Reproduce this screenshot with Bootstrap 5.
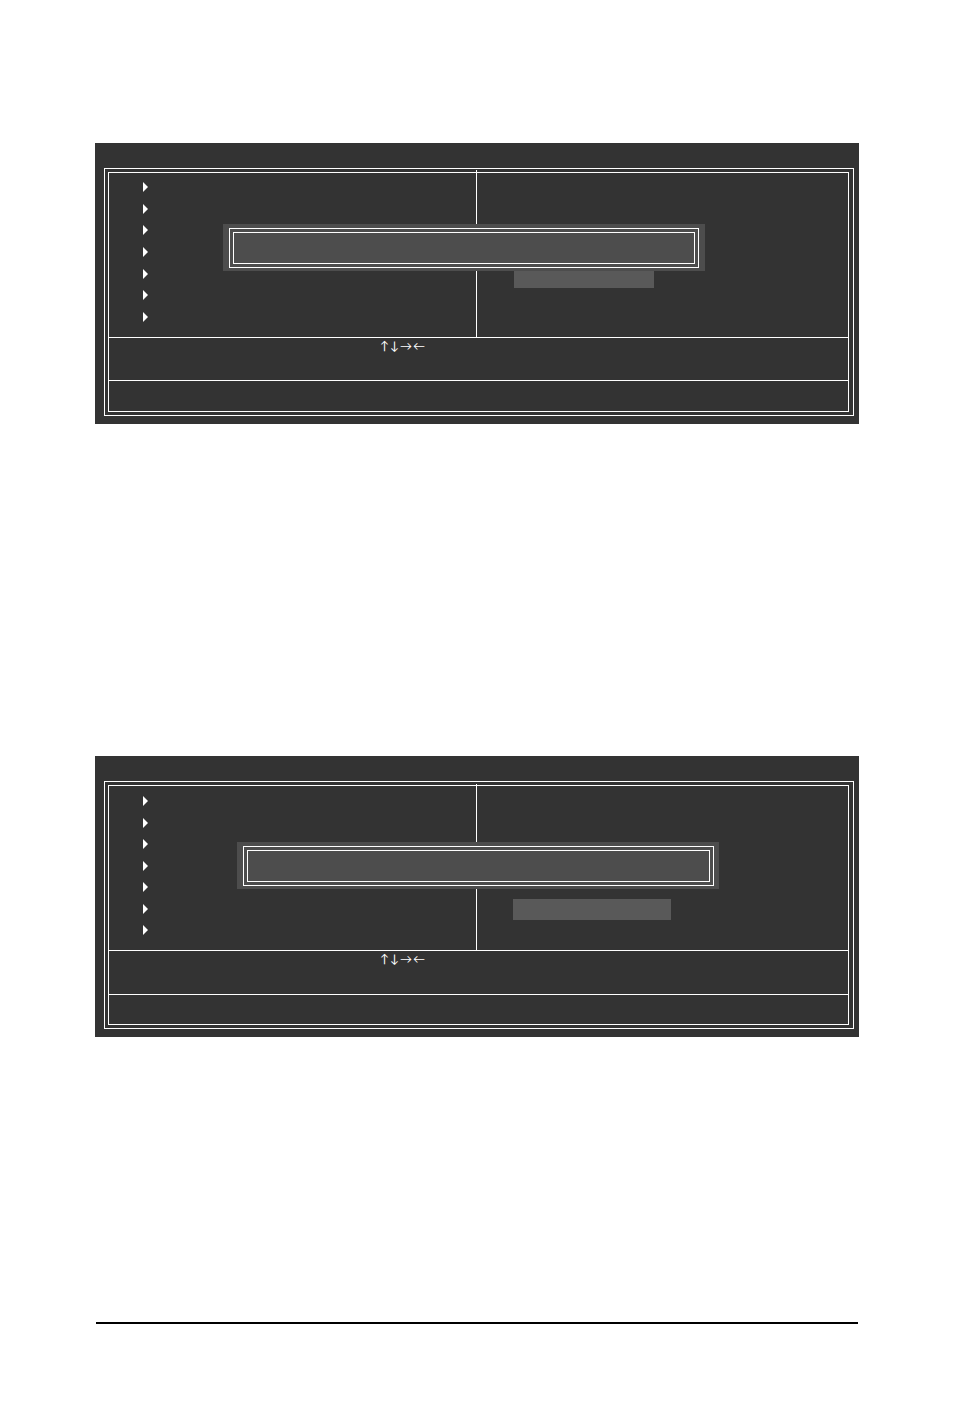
<!DOCTYPE html>
<html lang="en">
<head>
<meta charset="utf-8">
<meta name="viewport" content="width=device-width, initial-scale=1">
<title>CMOS Setup Utility</title>
<link href="https://cdn.jsdelivr.net/npm/bootstrap@5.3.0/dist/css/bootstrap.min.css" rel="stylesheet">
<style>
  body { background: #fff; color: #000; font-family: "Liberation Sans", Arial, sans-serif; }
  .manual-page { padding: 143px 95px 94px; }
  .bios { background: #333; color: #fff; padding: 25px 5px 8px 9px; }
  .bios + .bios { margin-top: 332px; }
  .frame-outer { border: 1px solid #fff; padding: 3px 4px 3px 3px; }
  .frame-inner { border: 1px solid #fff; }
  .menus { display: grid; grid-template-columns: 368fr 371fr; height: 165px; border-bottom: 1px solid #fff; }
  .menu-left { border-right: 1px solid #fff; margin-top: -3px; padding: 12px 0 15px 34px; }
  .menu-left svg { display: block; width: 5px; height: 10px; fill: #fff; }
  .menu-right { padding: 94px 0 0 37px; }
  .selected { background: #595959; width: 140px; height: 21px; }
  .keys { gap: 1px; height: 43px; border-bottom: 1px solid #fff; padding-left: 271px; font-family: Lato, sans-serif; font-size: 12px; line-height: 15px; }
  .hint { height: 30px; }
  .prompt { background: #4d4d4d; left: 128px; top: 81px; width: 482px; padding: 4px 6px 3px; }
  .prompt .frame-outer { padding: 3px; }
  .prompt .frame-inner { height: 32px; }
  .second .menu-left { margin-top: -2px; }
  .second .menu-right { padding: 113px 0 0 36px; }
  .second .selected { width: 158px; }
  .second .keys { height: 44px; }
  .second .hint { height: 29px; }
  .second .prompt { left: 142px; top: 86px; padding-right: 5px; }
  .page-rule { height: 2px; background: #000; margin: 285px 1px 0; }
</style>
</head>
<body>
<svg class="d-none"><symbol id="pointer" viewBox="0 0 5 10"><path d="M0 0 5 5 0 10Z"/></symbol></svg>
<main class="manual-page">
  <section class="bios position-relative">
    <div class="frame-outer"><div class="frame-inner">
      <div class="menus">
        <div class="menu-left d-flex flex-column justify-content-between">
          <svg><use href="#pointer"/></svg>
          <svg><use href="#pointer"/></svg>
          <svg><use href="#pointer"/></svg>
          <svg><use href="#pointer"/></svg>
          <svg><use href="#pointer"/></svg>
          <svg><use href="#pointer"/></svg>
          <svg><use href="#pointer"/></svg>
        </div>
        <div class="menu-right"><div class="selected"></div></div>
      </div>
      <div class="keys d-flex"><span>↑</span><span>↓</span><span>→</span><span>←</span></div>
      <div class="hint"></div>
    </div></div>
    <div class="prompt position-absolute"><div class="frame-outer"><div class="frame-inner"></div></div></div>
  </section>
  <section class="bios second position-relative">
    <div class="frame-outer"><div class="frame-inner">
      <div class="menus">
        <div class="menu-left d-flex flex-column justify-content-between">
          <svg><use href="#pointer"/></svg>
          <svg><use href="#pointer"/></svg>
          <svg><use href="#pointer"/></svg>
          <svg><use href="#pointer"/></svg>
          <svg><use href="#pointer"/></svg>
          <svg><use href="#pointer"/></svg>
          <svg><use href="#pointer"/></svg>
        </div>
        <div class="menu-right"><div class="selected"></div></div>
      </div>
      <div class="keys d-flex"><span>↑</span><span>↓</span><span>→</span><span>←</span></div>
      <div class="hint"></div>
    </div></div>
    <div class="prompt position-absolute"><div class="frame-outer"><div class="frame-inner"></div></div></div>
  </section>
  <div class="page-rule"></div>
</main>
<script src="https://cdn.jsdelivr.net/npm/bootstrap@5.3.0/dist/js/bootstrap.bundle.min.js"></script>
</body>
</html>
